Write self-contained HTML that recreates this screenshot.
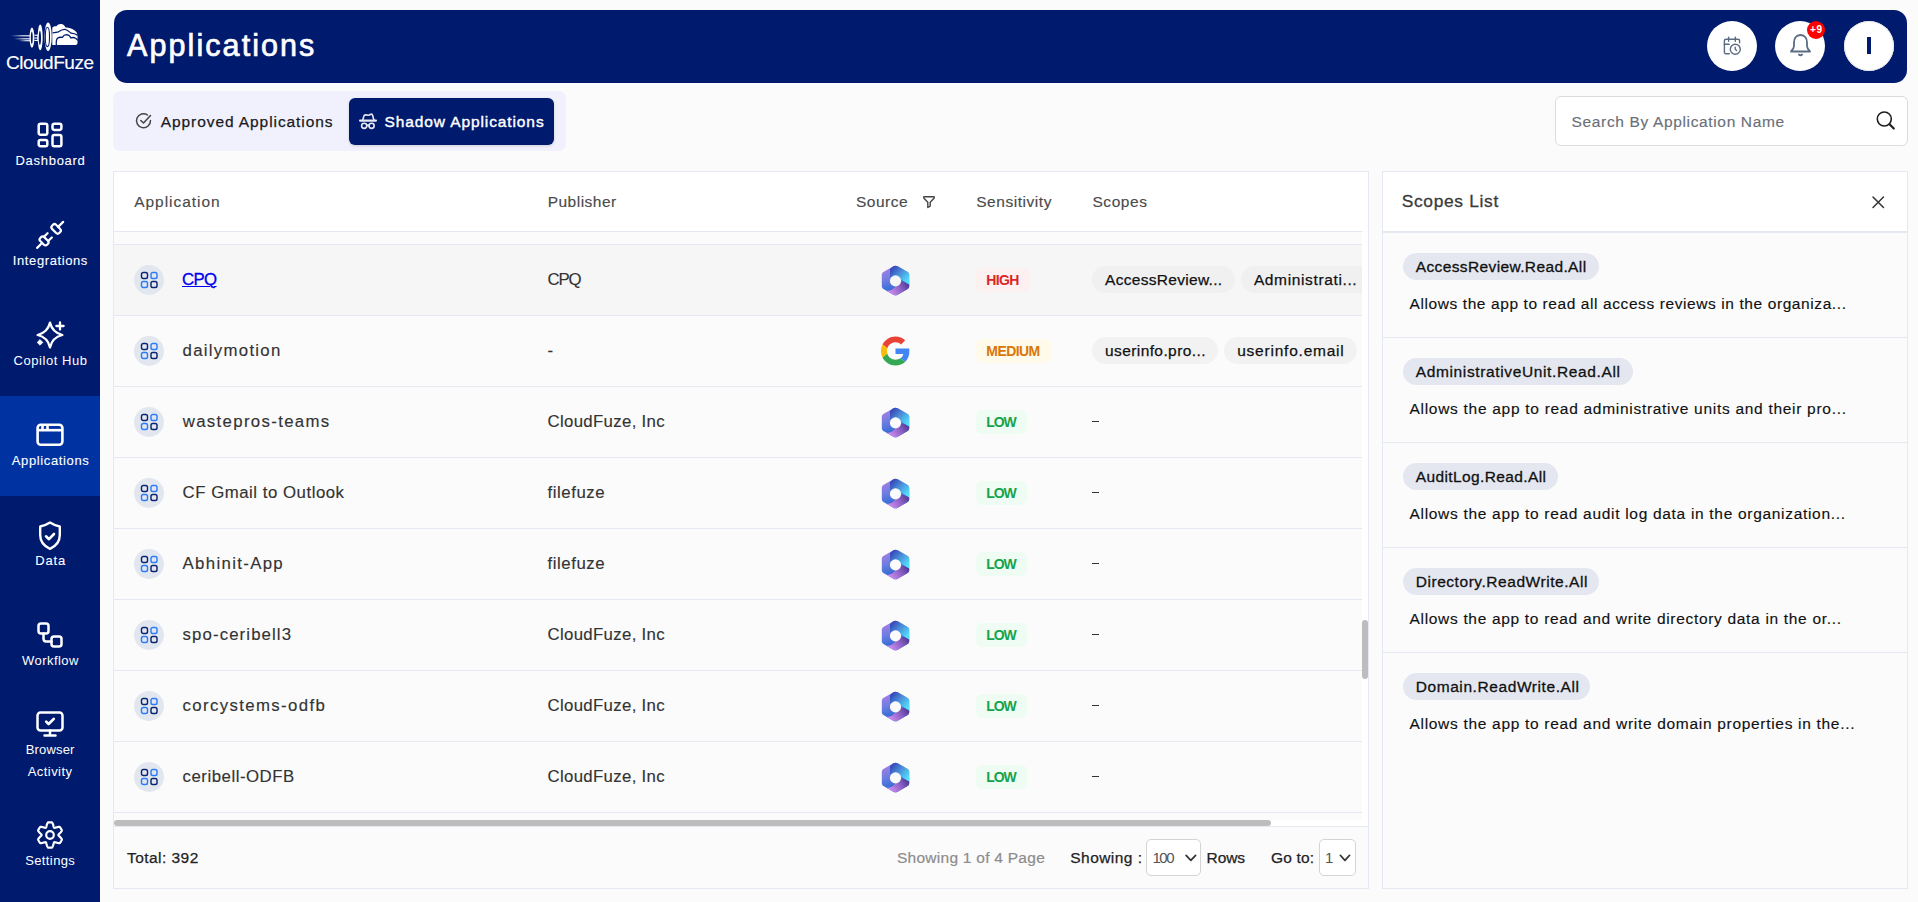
<!DOCTYPE html>
<html><head><meta charset="utf-8"><title>Applications</title>
<style>
html,body{margin:0;padding:0;width:1918px;height:902px;overflow:hidden;background:#fbfbfc;font-family:"Liberation Sans",sans-serif}
.t{position:absolute;white-space:nowrap}
#sb{position:absolute;left:0;top:0;width:100px;height:902px;background:#001a6e}
svg{overflow:visible}
</style></head><body>
<div id="sb"></div>
<div style="position:absolute;left:0;top:396px;width:100px;height:100px;background:#0033a1"></div>
<div class="t" style="left:6.00px;top:53px;font-size:19px;line-height:19px;letter-spacing:-0.488px;color:#fff;-webkit-text-stroke:0.15px #fff;">CloudFuze</div>
<svg style="position:absolute;left:0;top:0" width="100" height="80" viewBox="0 0 100 80">
<defs><linearGradient id="spd" x1="0" y1="0" x2="1" y2="0"><stop offset="0" stop-color="#fff" stop-opacity="0"/><stop offset=".55" stop-color="#fff" stop-opacity=".85"/><stop offset="1" stop-color="#fff"/></linearGradient></defs>
<rect x="11" y="35.2" width="21" height="1.2" fill="url(#spd)"/><rect x="14" y="38.2" width="18" height="1.2" fill="url(#spd)"/><rect x="19" y="40.1" width="13" height="1.2" fill="url(#spd)"/>
<ellipse cx="31.95" cy="37.65" rx="2.4" ry="10.1" fill="#fff"/><ellipse cx="31.8" cy="37.8" rx="0.95" ry="6.2" fill="#001a6e"/>
<rect x="34.4" y="34.7" width="3.6" height="1.1" fill="#fff"/><rect x="34.4" y="37.5" width="3.6" height="1.1" fill="#fff"/><rect x="34.4" y="39.9" width="3.6" height="1.1" fill="#fff"/><rect x="37.3" y="34.5" width="1.3" height="6.6" fill="#fff"/>
<ellipse cx="40.2" cy="37.45" rx="2.5" ry="12.85" fill="#fff"/><ellipse cx="39.9" cy="37.95" rx="1.15" ry="7.1" fill="#001a6e"/>
<ellipse cx="48.1" cy="36.7" rx="3.6" ry="14.3" fill="#fff"/><ellipse cx="47.4" cy="36.95" rx="2.1" ry="9.7" fill="none" stroke="#001a6e" stroke-width="1.1"/>
<path d="M52.3 45 L52.3 27.5 C53.5 26.5 55 26 56.5 26.2 C57.5 24.5 59.5 23.8 61.3 24 C63 24.2 64.5 25.2 65.5 27.5 C67 27.5 69 27.8 71 28.6 C74 29.5 76.5 31.5 77.5 34.5 L77.5 43 C77.5 44.2 76.7 45 75.5 45 Z" fill="#fff"/>
<path d="M52.6 32.8 C55 32.6 57 32.3 58.5 31.8 C61 30 63 29.2 65 29.4 C67.5 29.8 69.5 32 71 33.2 C73.5 33.3 75.5 33.8 77.8 35.4" fill="none" stroke="#001a6e" stroke-width="1.3"/>
<path d="M56.4 45.5 C56 42 56.3 39.5 57.5 38.2 C59 37 61 37.2 62.3 37.4 C63.5 35.3 65 34.6 66.5 34.6 C68.5 34.7 70 36 71 38 C72.3 37.4 74 37.3 75.5 38.2 C76.5 38.8 77.3 39.5 77.8 40.3" fill="none" stroke="#001a6e" stroke-width="1.3"/>
</svg>
<div class="t" style="left:15.50px;top:154px;font-size:13px;line-height:13px;letter-spacing:0.712px;color:#fff;-webkit-text-stroke:0.1px #fff;">Dashboard</div>
<div class="t" style="left:12.80px;top:254px;font-size:13px;line-height:13px;letter-spacing:0.600px;color:#fff;-webkit-text-stroke:0.1px #fff;">Integrations</div>
<div class="t" style="left:13.60px;top:354px;font-size:13px;line-height:13px;letter-spacing:0.540px;color:#fff;">Copilot Hub</div>
<div class="t" style="left:11.80px;top:454px;font-size:13px;line-height:13px;letter-spacing:0.627px;color:#fff;-webkit-text-stroke:0.1px #fff;">Applications</div>
<div class="t" style="left:35.30px;top:554px;font-size:13px;line-height:13px;letter-spacing:0.800px;color:#fff;-webkit-text-stroke:0.1px #fff;">Data</div>
<div class="t" style="left:22.10px;top:654px;font-size:13px;line-height:13px;letter-spacing:0.429px;color:#fff;">Workflow</div>
<div class="t" style="left:25.70px;top:743px;font-size:13px;line-height:13px;letter-spacing:0.167px;color:#fff;">Browser</div>
<div class="t" style="left:27.70px;top:765px;font-size:13px;line-height:13px;letter-spacing:0.443px;color:#fff;">Activity</div>
<div class="t" style="left:25.20px;top:854px;font-size:13px;line-height:13px;letter-spacing:0.386px;color:#fff;">Settings</div>
<svg style="position:absolute;left:36px;top:121px" width="28" height="28" viewBox="0 0 28 28" fill="none" stroke="#fff" stroke-width="2.5" stroke-linejoin="round">
<rect x="2.7" y="2.7" width="8.6" height="11" rx="1.8"/><rect x="16.5" y="2.7" width="8.9" height="6.2" rx="1.8"/>
<rect x="2.7" y="19" width="8.6" height="6.2" rx="1.8"/><rect x="16.5" y="14.1" width="8.9" height="11.1" rx="1.8"/></svg>
<svg style="position:absolute;left:36px;top:221px" width="28" height="28" viewBox="0 0 28 28" fill="none" stroke="#fff" stroke-width="2.2" stroke-linecap="round" stroke-linejoin="round">
<g transform="rotate(-45 14 14)">
<path d="M-4.2 14 H2.8"/><rect x="2.8" y="9.2" width="5.6" height="9.6" rx="2.2"/><path d="M8.4 11 H13.6 M8.4 17 H13.6"/>
<rect x="19.8" y="8.9" width="5.7" height="10.2" rx="2.2"/><path d="M25.5 14 H32.6"/>
</g></svg>
<svg style="position:absolute;left:36px;top:321px" width="28" height="28" viewBox="0 0 28 28">
<path d="M14 1.6 Q16.3 11.7 26.4 14 Q16.3 16.3 14 26.4 Q11.7 16.3 1.6 14 Q11.7 11.7 14 1.6 Z" fill="none" stroke="#fff" stroke-width="2.3" stroke-linejoin="round"/>
<path d="M24 1.4 V8.6 M20.4 5 H27.6" stroke="#fff" stroke-width="2.3" stroke-linecap="round"/>
<path d="M4 18.6 L6.8 21.4 L4 24.2 L1.2 21.4 Z" fill="#fff" stroke="#fff" stroke-width="0.8" stroke-linejoin="round"/></svg>
<svg style="position:absolute;left:36px;top:423px" width="28" height="24" viewBox="0 0 28 24" fill="none" stroke="#fff" stroke-width="2.6" stroke-linecap="butt" stroke-linejoin="round">
<rect x="1.6" y="1.8" width="24.8" height="20" rx="3.2"/><path d="M1.6 7.2 H26.4"/><path d="M6.5 1.8 V7.2 M11.5 1.8 V7.2" stroke-width="2.6"/></svg>
<svg style="position:absolute;left:37px;top:520.6px" width="26" height="30" viewBox="0 0 26 30" fill="none" stroke="#fff" stroke-width="2.4" stroke-linecap="round" stroke-linejoin="round">
<path d="M13 1.6 C10 3.6 7 4.9 3.2 5.5 L3.2 14 C3.2 21 7.5 25.3 13 27.8 C18.5 25.3 22.8 21 22.8 14 L22.8 5.5 C19 4.9 16 3.6 13 1.6 Z"/><path d="M9 15.3 L12 18.2 L17 13" stroke-width="2.6"/></svg>
<svg style="position:absolute;left:37px;top:622px" width="26" height="26" viewBox="0 0 26 26" fill="none" stroke="#fff" stroke-width="2.5" stroke-linecap="round" stroke-linejoin="round">
<rect x="1.5" y="1.5" width="10" height="10" rx="2.5"/><rect x="14.5" y="14.5" width="10" height="10" rx="2.5"/><path d="M6.5 11.5 V16.5 C6.5 18 7 19.5 9 19.5 H14.5"/></svg>
<svg style="position:absolute;left:36px;top:711px" width="28" height="26" viewBox="0 0 28 26" fill="none" stroke="#fff" stroke-width="2.5" stroke-linecap="round" stroke-linejoin="round">
<rect x="1.5" y="1.5" width="25" height="18" rx="3"/><path d="M14 19.5 V24.5 M8.5 24.5 H19.5"/><path d="M10.2 10.6 L12.6 13 L17.8 7.9" stroke-width="2.7"/></svg>
<svg style="position:absolute;left:36px;top:821px" width="28" height="28" viewBox="0 0 28 28" fill="none" stroke="#fff" stroke-width="2.2" stroke-linejoin="round">
<path d="M22.40 14.00 L22.45 14.22 L22.58 14.45 L22.76 14.69 L23.00 14.95 L23.27 15.22 L23.58 15.52 L23.90 15.84 L24.24 16.18 L24.57 16.54 L24.90 16.92 L25.20 17.32 L25.48 17.73 L25.72 18.15 L25.86 18.55 L25.73 18.86 L25.60 19.17 L25.46 19.47 L25.32 19.77 L25.16 20.06 L25.00 20.35 L24.83 20.64 L24.65 20.92 L24.47 21.19 L24.27 21.46 L24.08 21.73 L23.87 21.99 L23.46 22.08 L22.97 22.08 L22.47 22.04 L21.98 21.98 L21.48 21.89 L21.00 21.78 L20.54 21.66 L20.10 21.54 L19.69 21.42 L19.32 21.32 L18.98 21.25 L18.68 21.20 L18.42 21.21 L18.20 21.27 L18.03 21.43 L17.90 21.65 L17.78 21.94 L17.68 22.27 L17.58 22.64 L17.48 23.05 L17.36 23.49 L17.23 23.95 L17.09 24.42 L16.92 24.90 L16.73 25.36 L16.51 25.81 L16.27 26.23 L15.99 26.54 L15.66 26.59 L15.33 26.63 L15.00 26.66 L14.66 26.68 L14.33 26.70 L14.00 26.70 L13.67 26.70 L13.34 26.68 L13.00 26.66 L12.67 26.63 L12.34 26.59 L12.01 26.54 L11.73 26.23 L11.49 25.81 L11.27 25.36 L11.08 24.90 L10.91 24.42 L10.77 23.95 L10.64 23.49 L10.52 23.05 L10.42 22.64 L10.32 22.27 L10.22 21.94 L10.10 21.65 L9.97 21.43 L9.80 21.27 L9.58 21.21 L9.32 21.20 L9.02 21.25 L8.68 21.32 L8.31 21.42 L7.90 21.54 L7.46 21.66 L7.00 21.78 L6.52 21.89 L6.02 21.98 L5.53 22.04 L5.03 22.08 L4.54 22.08 L4.13 21.99 L3.92 21.73 L3.73 21.46 L3.53 21.19 L3.35 20.92 L3.17 20.64 L3.00 20.35 L2.84 20.06 L2.68 19.77 L2.54 19.47 L2.40 19.17 L2.27 18.86 L2.14 18.55 L2.28 18.15 L2.52 17.73 L2.80 17.32 L3.10 16.92 L3.43 16.54 L3.76 16.18 L4.10 15.84 L4.42 15.52 L4.73 15.22 L5.00 14.95 L5.24 14.69 L5.42 14.45 L5.55 14.22 L5.60 14.00 L5.55 13.78 L5.42 13.55 L5.24 13.31 L5.00 13.05 L4.73 12.78 L4.42 12.48 L4.10 12.16 L3.76 11.82 L3.43 11.46 L3.10 11.08 L2.80 10.68 L2.52 10.27 L2.28 9.85 L2.14 9.45 L2.27 9.14 L2.40 8.83 L2.54 8.53 L2.68 8.23 L2.84 7.94 L3.00 7.65 L3.17 7.36 L3.35 7.08 L3.53 6.81 L3.73 6.54 L3.92 6.27 L4.13 6.01 L4.54 5.92 L5.03 5.92 L5.53 5.96 L6.02 6.02 L6.52 6.11 L7.00 6.22 L7.46 6.34 L7.90 6.46 L8.31 6.58 L8.68 6.68 L9.02 6.75 L9.32 6.80 L9.58 6.79 L9.80 6.73 L9.97 6.57 L10.10 6.35 L10.22 6.06 L10.32 5.73 L10.42 5.36 L10.52 4.95 L10.64 4.51 L10.77 4.05 L10.91 3.58 L11.08 3.10 L11.27 2.64 L11.49 2.19 L11.73 1.77 L12.01 1.46 L12.34 1.41 L12.67 1.37 L13.00 1.34 L13.34 1.32 L13.67 1.30 L14.00 1.30 L14.33 1.30 L14.66 1.32 L15.00 1.34 L15.33 1.37 L15.66 1.41 L15.99 1.46 L16.27 1.77 L16.51 2.19 L16.73 2.64 L16.92 3.10 L17.09 3.58 L17.23 4.05 L17.36 4.51 L17.48 4.95 L17.58 5.36 L17.68 5.73 L17.78 6.06 L17.90 6.35 L18.03 6.57 L18.20 6.73 L18.42 6.79 L18.68 6.80 L18.98 6.75 L19.32 6.68 L19.69 6.58 L20.10 6.46 L20.54 6.34 L21.00 6.22 L21.48 6.11 L21.98 6.02 L22.47 5.96 L22.97 5.92 L23.46 5.92 L23.87 6.01 L24.08 6.27 L24.27 6.54 L24.47 6.81 L24.65 7.08 L24.83 7.36 L25.00 7.65 L25.16 7.94 L25.32 8.23 L25.46 8.53 L25.60 8.83 L25.73 9.14 L25.86 9.45 L25.72 9.85 L25.48 10.27 L25.20 10.68 L24.90 11.08 L24.57 11.46 L24.24 11.82 L23.90 12.16 L23.58 12.48 L23.27 12.78 L23.00 13.05 L22.76 13.31 L22.58 13.55 L22.45 13.78 L22.40 14.00Z"/><circle cx="14" cy="14" r="3.8"/></svg>
<div style="position:absolute;left:114px;top:10px;width:1793px;height:73px;background:#001a6e;border-radius:13px"></div>
<div class="t" style="left:127.10px;top:30px;font-size:30.5px;line-height:30.5px;letter-spacing:2.073px;color:#fff;-webkit-text-stroke:0.7px #fff;">Applications</div>
<div style="position:absolute;left:1707px;top:21px;width:50px;height:50px;border-radius:50%;background:#fff;"></div>
<div style="position:absolute;left:1775px;top:21px;width:50px;height:50px;border-radius:50%;background:#fff;"></div>
<div style="position:absolute;left:1844px;top:21px;width:50px;height:50px;border-radius:50%;background:#fff;box-shadow:inset 0 0 0 1px #e6e6e6;"></div>
<svg style="position:absolute;left:1722px;top:35px" width="22" height="22" viewBox="0 0 22 22" fill="none" stroke="#5b6b82" stroke-width="1.4" stroke-linecap="round" stroke-linejoin="round">
<path d="M7.3 18.8 H4 C3 18.8 2.4 18.2 2.4 17.2 V5.8 C2.4 4.8 3 4.3 4 4.3 H16 C17 4.3 17.6 4.8 17.6 5.8 V7.8"/><path d="M6.6 2.2 V6.2 M13.3 2.2 V6.2 M2.4 9.3 H7.2"/>
<circle cx="13.3" cy="14.2" r="5"/><path d="M13.2 12.3 V14.3 L14.6 15.6"/></svg>
<svg style="position:absolute;left:1789px;top:33.3px" width="23" height="25" viewBox="0 0 23 25" fill="none" stroke="#5b6b82" stroke-width="1.8" stroke-linecap="round" stroke-linejoin="round">
<path d="M11.5 2 C7 2 5 5.5 5 9.5 L5 13 C5 15 3.5 17 2 18.5 H21 C19.5 17 18 15 18 13 L18 9.5 C18 5.5 16 2 11.5 2 Z"/><path d="M10 21.5 C10.5 22.5 12.5 22.5 13 21.5"/></svg>
<div style="position:absolute;left:1807px;top:21px;width:18px;height:18px;border-radius:50%;background:#f00"></div>
<div class="t" style="left:1810.00px;top:25px;font-size:10px;line-height:10px;letter-spacing:0.600px;color:#fff;font-weight:bold;">+9</div>
<div style="position:absolute;left:1867.3px;top:37px;width:3.5px;height:17px;background:#001a6e"></div>
<div style="position:absolute;left:113px;top:91px;width:453px;height:60px;background:#f1f1fe;border-radius:7px"></div>
<div style="position:absolute;left:349px;top:98px;width:205px;height:47px;background:#001a6e;border-radius:6px;box-shadow:0 1px 3px rgba(0,0,0,.15)"></div>
<svg style="position:absolute;left:135px;top:112px" width="18" height="18" viewBox="0 0 18 18" fill="none" stroke="#444" stroke-width="1.5" stroke-linecap="round" stroke-linejoin="round">
<path d="M15.5 8.5 A7 7 0 1 1 12.5 3"/><path d="M5.8 8.5 L8.5 11 L15.5 3.5"/></svg>
<div class="t" style="left:160.80px;top:114px;font-size:15.5px;line-height:15.5px;letter-spacing:0.915px;color:#1a1a1a;-webkit-text-stroke:0.25px #1a1a1a;">Approved Applications</div>
<svg style="position:absolute;left:359px;top:112.5px" width="18" height="17" viewBox="0 0 18 17" fill="none" stroke="#e6e8f0" stroke-width="1.6" stroke-linecap="round" stroke-linejoin="round">
<path d="M1 7.6 H17" stroke-width="2.1"/><path d="M3.6 7.5 L5 2.8 C5.3 1.9 6 1.7 7 1.9 L9 2.3 C10 2.4 11.2 1.2 12.2 1.1 C13 1 13.4 1.6 13.6 2.3 L15 7.5"/>
<circle cx="5.2" cy="12.8" r="2.6"/><circle cx="12.6" cy="12.8" r="2.6"/><path d="M7.8 12.6 C8.4 12 9.4 12 10 12.6"/></svg>
<div class="t" style="left:384.50px;top:114px;font-size:15.5px;line-height:15.5px;letter-spacing:0.894px;color:#fff;-webkit-text-stroke:0.4px #fff;">Shadow Applications</div>
<div style="position:absolute;left:1555px;top:96px;width:351px;height:48px;background:#fff;border:1px solid #dcdcdc;border-radius:6px"></div>
<div class="t" style="left:1571.60px;top:114px;font-size:15.5px;line-height:15.5px;letter-spacing:0.644px;color:#6b6f78;-webkit-text-stroke:0.15px #6b6f78;">Search By Application Name</div>
<svg style="position:absolute;left:1875px;top:110px" width="21" height="21" viewBox="0 0 21 21" fill="none" stroke="#1f1f1f" stroke-width="1.6" stroke-linecap="round">
<circle cx="9.3" cy="9" r="7"/><path d="M14.5 14.2 L18.8 18.5" stroke-width="2.2"/></svg>
<div style="position:absolute;left:113px;top:171px;width:1254px;height:716px;border:1px solid #e3e8f1;background:#fbfbfc"></div>
<div style="position:absolute;left:114px;top:172px;width:1254px;height:59px;background:#fff"></div>
<div style="position:absolute;left:114px;top:231px;width:1248px;height:1px;background:#e3e8f1"></div>
<div style="position:absolute;left:114px;top:244px;width:1248px;height:1px;background:#e3e8f1"></div>
<div style="position:absolute;left:1362px;top:232px;width:6px;height:594px;background:#fff"></div>
<div class="t" style="left:134.20px;top:194px;font-size:15.5px;line-height:15.5px;letter-spacing:0.960px;color:#4a4a4a;-webkit-text-stroke:0.15px #4a4a4a;">Application</div>
<div class="t" style="left:547.70px;top:194px;font-size:15.5px;line-height:15.5px;letter-spacing:0.488px;color:#4a4a4a;-webkit-text-stroke:0.15px #4a4a4a;">Publisher</div>
<div class="t" style="left:855.90px;top:194px;font-size:15.5px;line-height:15.5px;letter-spacing:0.520px;color:#4a4a4a;-webkit-text-stroke:0.15px #4a4a4a;">Source</div>
<div class="t" style="left:976.20px;top:194px;font-size:15.5px;line-height:15.5px;letter-spacing:0.550px;color:#4a4a4a;-webkit-text-stroke:0.15px #4a4a4a;">Sensitivity</div>
<div class="t" style="left:1092.40px;top:194px;font-size:15.5px;line-height:15.5px;letter-spacing:0.580px;color:#4a4a4a;-webkit-text-stroke:0.15px #4a4a4a;">Scopes</div>
<svg style="position:absolute;left:922px;top:195px" width="14" height="14" viewBox="0 0 14 14" fill="none" stroke="#444" stroke-width="1.4" stroke-linejoin="round">
<path d="M1.8 1.8 C1.6 2.6 1.7 3 2.2 3.6 L5.8 7.3 V12.5 L8.2 11.2 V7.3 L11.8 3.6 C12.3 3 12.4 2.6 12.2 1.8 Z"/></svg>
<div style="position:absolute;left:114px;top:245px;width:1248px;height:70px;background:#f6f6f7"></div>
<div style="position:absolute;left:114px;top:315px;width:1248px;height:1px;background:#e3e8f1"></div>
<div style="position:absolute;left:134px;top:265px;width:30px;height:30px;border-radius:50%;background:#e2e7ef"></div>
<svg style="position:absolute;left:140px;top:271px" width="19" height="18" viewBox="0 0 19 18" fill="none" stroke-width="1.45">
<rect x="1.5" y="1.5" width="6" height="6" rx="1.8" stroke="#0b2470"/><rect x="11" y="1.5" width="6" height="6" rx="1.8" stroke="#2d7cf7"/>
<rect x="1.5" y="10.5" width="6" height="6" rx="1.8" stroke="#2d7cf7"/><rect x="11" y="10.5" width="6" height="6" rx="1.8" stroke="#0b2470"/></svg>
<div class="t" style="left:182.00px;top:272px;font-size:16.8px;line-height:16.8px;letter-spacing:-0.600px;color:#0000ee;-webkit-text-stroke:0.3px #0000ee;text-decoration:underline;text-underline-offset:1px;text-decoration-thickness:1px;">CPQ</div>
<div class="t" style="left:547.50px;top:272px;font-size:16.8px;line-height:16.8px;letter-spacing:-1.100px;color:#333;-webkit-text-stroke:0.15px #333;">CPQ</div>
<svg style="position:absolute;left:881px;top:264.5px" width="29" height="31" viewBox="0 0 29 31">
<defs>
<linearGradient id="ga0" x1="0.1" y1="0.1" x2="0.9" y2="0.8"><stop offset="0" stop-color="#3347b8"/><stop offset=".45" stop-color="#4a8ad8"/><stop offset="1" stop-color="#52dcf8"/></linearGradient>
<linearGradient id="gb0" x1="0" y1="0" x2="0.3" y2="1"><stop offset="0" stop-color="#b67ee8"/><stop offset=".5" stop-color="#6d7de0"/><stop offset="1" stop-color="#1a66d0"/></linearGradient>
<linearGradient id="gc0" x1="0" y1="0.6" x2="1" y2="0.2"><stop offset="0" stop-color="#d690f3"/><stop offset=".55" stop-color="#8f63c8"/><stop offset="1" stop-color="#4f3690"/></linearGradient>
</defs>
<path d="M12.3 1.3 C13.7 0.5 15.3 0.5 16.7 1.3 L26.6 7 C27.6 7.6 28.2 8.6 28.2 9.8 L28.2 21.2 C28.2 22.4 27.6 23.4 26.6 24 L16.7 29.7 C15.3 30.5 13.7 30.5 12.3 29.7 L2.4 24 C1.4 23.4 0.8 22.4 0.8 21.2 L0.8 9.8 C0.8 8.6 1.4 7.6 2.4 7 Z" fill="url(#gb0)"/>
<path d="M9 4 L12.3 1.3 C13.7 0.5 15.3 0.5 16.7 1.3 L26.6 7 C27.6 7.6 28.2 8.6 28.2 9.8 L28.2 19.8 L20 14.5 C17.5 12.2 14 10.8 9 12.5 Z" fill="url(#ga0)"/>
<path d="M28.2 19.8 L28.2 21.2 C28.2 22.4 27.6 23.4 26.6 24 L16.7 29.7 C15.3 30.5 13.7 30.5 12.3 29.7 L5 25.5 C8.5 26.5 11.5 24.5 14 22 L19 17.5 C21.5 15.5 25 17.5 28.2 19.8 Z" fill="url(#gc0)"/>
<circle cx="14.5" cy="15.9" r="5.6" fill="#f6f6f7"/>
</svg>
<div style="position:absolute;left:976px;top:268px;width:54px;height:24px;background:#fdf0f0;border-radius:6px"></div>
<div class="t" style="left:986.30px;top:273px;font-size:14px;line-height:14px;letter-spacing:-0.667px;color:#dc2626;font-weight:bold;">HIGH</div>
<div style="position:absolute;left:114px;top:386px;width:1248px;height:1px;background:#e3e8f1"></div>
<div style="position:absolute;left:134px;top:336px;width:30px;height:30px;border-radius:50%;background:#e2e7ef"></div>
<svg style="position:absolute;left:140px;top:342px" width="19" height="18" viewBox="0 0 19 18" fill="none" stroke-width="1.45">
<rect x="1.5" y="1.5" width="6" height="6" rx="1.8" stroke="#0b2470"/><rect x="11" y="1.5" width="6" height="6" rx="1.8" stroke="#2d7cf7"/>
<rect x="1.5" y="10.5" width="6" height="6" rx="1.8" stroke="#2d7cf7"/><rect x="11" y="10.5" width="6" height="6" rx="1.8" stroke="#0b2470"/></svg>
<div class="t" style="left:182.60px;top:343px;font-size:16.8px;line-height:16.8px;letter-spacing:1.280px;color:#333;-webkit-text-stroke:0.15px #333;">dailymotion</div>
<div class="t" style="left:547.50px;top:343px;font-size:16.8px;line-height:16.8px;letter-spacing:0.000px;color:#333;-webkit-text-stroke:0.15px #333;">-</div>
<svg style="position:absolute;left:881px;top:336px" width="29" height="30" viewBox="0 0 48 48">
<path fill="#EA4335" d="M24 9.5c3.54 0 6.71 1.22 9.21 3.6l6.85-6.85C35.9 2.38 30.47 0 24 0 14.62 0 6.51 5.38 2.56 13.22l7.98 6.19C12.43 13.72 17.74 9.5 24 9.5z"/>
<path fill="#4285F4" d="M46.98 24.55c0-1.57-.15-3.09-.38-4.55H24v9.02h12.94c-.58 2.96-2.26 5.48-4.78 7.18l7.73 6c4.51-4.18 7.09-10.36 7.09-17.65z"/>
<path fill="#FBBC05" d="M10.53 28.59c-.48-1.45-.76-2.99-.76-4.59s.27-3.14.76-4.59l-7.98-6.19C.92 16.46 0 20.12 0 24c0 3.88.92 7.54 2.56 10.78l7.97-6.19z"/>
<path fill="#34A853" d="M24 48c6.48 0 11.93-2.13 15.89-5.81l-7.73-6c-2.15 1.45-4.92 2.3-8.16 2.3-6.26 0-11.57-4.22-13.47-9.91l-7.98 6.19C6.51 42.62 14.62 48 24 48z"/>
</svg>
<div style="position:absolute;left:976px;top:339px;width:75px;height:24px;background:#fffaea;border-radius:6px"></div>
<div class="t" style="left:986.30px;top:344px;font-size:14px;line-height:14px;letter-spacing:-0.560px;color:#d97706;font-weight:bold;">MEDIUM</div>
<div style="position:absolute;left:114px;top:457px;width:1248px;height:1px;background:#e3e8f1"></div>
<div style="position:absolute;left:134px;top:407px;width:30px;height:30px;border-radius:50%;background:#e2e7ef"></div>
<svg style="position:absolute;left:140px;top:413px" width="19" height="18" viewBox="0 0 19 18" fill="none" stroke-width="1.45">
<rect x="1.5" y="1.5" width="6" height="6" rx="1.8" stroke="#0b2470"/><rect x="11" y="1.5" width="6" height="6" rx="1.8" stroke="#2d7cf7"/>
<rect x="1.5" y="10.5" width="6" height="6" rx="1.8" stroke="#2d7cf7"/><rect x="11" y="10.5" width="6" height="6" rx="1.8" stroke="#0b2470"/></svg>
<div class="t" style="left:182.70px;top:414px;font-size:16.8px;line-height:16.8px;letter-spacing:1.343px;color:#333;-webkit-text-stroke:0.15px #333;">wastepros-teams</div>
<div class="t" style="left:547.50px;top:414px;font-size:16.8px;line-height:16.8px;letter-spacing:0.331px;color:#333;-webkit-text-stroke:0.15px #333;">CloudFuze, Inc</div>
<svg style="position:absolute;left:881px;top:406.5px" width="29" height="31" viewBox="0 0 29 31">
<defs>
<linearGradient id="ga2" x1="0.1" y1="0.1" x2="0.9" y2="0.8"><stop offset="0" stop-color="#3347b8"/><stop offset=".45" stop-color="#4a8ad8"/><stop offset="1" stop-color="#52dcf8"/></linearGradient>
<linearGradient id="gb2" x1="0" y1="0" x2="0.3" y2="1"><stop offset="0" stop-color="#b67ee8"/><stop offset=".5" stop-color="#6d7de0"/><stop offset="1" stop-color="#1a66d0"/></linearGradient>
<linearGradient id="gc2" x1="0" y1="0.6" x2="1" y2="0.2"><stop offset="0" stop-color="#d690f3"/><stop offset=".55" stop-color="#8f63c8"/><stop offset="1" stop-color="#4f3690"/></linearGradient>
</defs>
<path d="M12.3 1.3 C13.7 0.5 15.3 0.5 16.7 1.3 L26.6 7 C27.6 7.6 28.2 8.6 28.2 9.8 L28.2 21.2 C28.2 22.4 27.6 23.4 26.6 24 L16.7 29.7 C15.3 30.5 13.7 30.5 12.3 29.7 L2.4 24 C1.4 23.4 0.8 22.4 0.8 21.2 L0.8 9.8 C0.8 8.6 1.4 7.6 2.4 7 Z" fill="url(#gb2)"/>
<path d="M9 4 L12.3 1.3 C13.7 0.5 15.3 0.5 16.7 1.3 L26.6 7 C27.6 7.6 28.2 8.6 28.2 9.8 L28.2 19.8 L20 14.5 C17.5 12.2 14 10.8 9 12.5 Z" fill="url(#ga2)"/>
<path d="M28.2 19.8 L28.2 21.2 C28.2 22.4 27.6 23.4 26.6 24 L16.7 29.7 C15.3 30.5 13.7 30.5 12.3 29.7 L5 25.5 C8.5 26.5 11.5 24.5 14 22 L19 17.5 C21.5 15.5 25 17.5 28.2 19.8 Z" fill="url(#gc2)"/>
<circle cx="14.5" cy="15.9" r="5.6" fill="#fbfbfc"/>
</svg>
<div style="position:absolute;left:976px;top:410px;width:51px;height:24px;background:#effcf3;border-radius:6px"></div>
<div class="t" style="left:986.30px;top:415px;font-size:14px;line-height:14px;letter-spacing:-1.100px;color:#16a34a;font-weight:bold;">LOW</div>
<div style="position:absolute;left:1092px;top:421px;width:7px;height:1.3px;background:#333"></div>
<div style="position:absolute;left:114px;top:528px;width:1248px;height:1px;background:#e3e8f1"></div>
<div style="position:absolute;left:134px;top:478px;width:30px;height:30px;border-radius:50%;background:#e2e7ef"></div>
<svg style="position:absolute;left:140px;top:484px" width="19" height="18" viewBox="0 0 19 18" fill="none" stroke-width="1.45">
<rect x="1.5" y="1.5" width="6" height="6" rx="1.8" stroke="#0b2470"/><rect x="11" y="1.5" width="6" height="6" rx="1.8" stroke="#2d7cf7"/>
<rect x="1.5" y="10.5" width="6" height="6" rx="1.8" stroke="#2d7cf7"/><rect x="11" y="10.5" width="6" height="6" rx="1.8" stroke="#0b2470"/></svg>
<div class="t" style="left:182.60px;top:485px;font-size:16.8px;line-height:16.8px;letter-spacing:0.522px;color:#333;-webkit-text-stroke:0.15px #333;">CF Gmail to Outlook</div>
<div class="t" style="left:547.50px;top:485px;font-size:16.8px;line-height:16.8px;letter-spacing:0.557px;color:#333;-webkit-text-stroke:0.15px #333;">filefuze</div>
<svg style="position:absolute;left:881px;top:477.5px" width="29" height="31" viewBox="0 0 29 31">
<defs>
<linearGradient id="ga3" x1="0.1" y1="0.1" x2="0.9" y2="0.8"><stop offset="0" stop-color="#3347b8"/><stop offset=".45" stop-color="#4a8ad8"/><stop offset="1" stop-color="#52dcf8"/></linearGradient>
<linearGradient id="gb3" x1="0" y1="0" x2="0.3" y2="1"><stop offset="0" stop-color="#b67ee8"/><stop offset=".5" stop-color="#6d7de0"/><stop offset="1" stop-color="#1a66d0"/></linearGradient>
<linearGradient id="gc3" x1="0" y1="0.6" x2="1" y2="0.2"><stop offset="0" stop-color="#d690f3"/><stop offset=".55" stop-color="#8f63c8"/><stop offset="1" stop-color="#4f3690"/></linearGradient>
</defs>
<path d="M12.3 1.3 C13.7 0.5 15.3 0.5 16.7 1.3 L26.6 7 C27.6 7.6 28.2 8.6 28.2 9.8 L28.2 21.2 C28.2 22.4 27.6 23.4 26.6 24 L16.7 29.7 C15.3 30.5 13.7 30.5 12.3 29.7 L2.4 24 C1.4 23.4 0.8 22.4 0.8 21.2 L0.8 9.8 C0.8 8.6 1.4 7.6 2.4 7 Z" fill="url(#gb3)"/>
<path d="M9 4 L12.3 1.3 C13.7 0.5 15.3 0.5 16.7 1.3 L26.6 7 C27.6 7.6 28.2 8.6 28.2 9.8 L28.2 19.8 L20 14.5 C17.5 12.2 14 10.8 9 12.5 Z" fill="url(#ga3)"/>
<path d="M28.2 19.8 L28.2 21.2 C28.2 22.4 27.6 23.4 26.6 24 L16.7 29.7 C15.3 30.5 13.7 30.5 12.3 29.7 L5 25.5 C8.5 26.5 11.5 24.5 14 22 L19 17.5 C21.5 15.5 25 17.5 28.2 19.8 Z" fill="url(#gc3)"/>
<circle cx="14.5" cy="15.9" r="5.6" fill="#fbfbfc"/>
</svg>
<div style="position:absolute;left:976px;top:481px;width:51px;height:24px;background:#effcf3;border-radius:6px"></div>
<div class="t" style="left:986.30px;top:486px;font-size:14px;line-height:14px;letter-spacing:-1.100px;color:#16a34a;font-weight:bold;">LOW</div>
<div style="position:absolute;left:1092px;top:492px;width:7px;height:1.3px;background:#333"></div>
<div style="position:absolute;left:114px;top:599px;width:1248px;height:1px;background:#e3e8f1"></div>
<div style="position:absolute;left:134px;top:549px;width:30px;height:30px;border-radius:50%;background:#e2e7ef"></div>
<svg style="position:absolute;left:140px;top:555px" width="19" height="18" viewBox="0 0 19 18" fill="none" stroke-width="1.45">
<rect x="1.5" y="1.5" width="6" height="6" rx="1.8" stroke="#0b2470"/><rect x="11" y="1.5" width="6" height="6" rx="1.8" stroke="#2d7cf7"/>
<rect x="1.5" y="10.5" width="6" height="6" rx="1.8" stroke="#2d7cf7"/><rect x="11" y="10.5" width="6" height="6" rx="1.8" stroke="#0b2470"/></svg>
<div class="t" style="left:182.60px;top:556px;font-size:16.8px;line-height:16.8px;letter-spacing:1.330px;color:#333;-webkit-text-stroke:0.15px #333;">Abhinit-App</div>
<div class="t" style="left:547.50px;top:556px;font-size:16.8px;line-height:16.8px;letter-spacing:0.557px;color:#333;-webkit-text-stroke:0.15px #333;">filefuze</div>
<svg style="position:absolute;left:881px;top:548.5px" width="29" height="31" viewBox="0 0 29 31">
<defs>
<linearGradient id="ga4" x1="0.1" y1="0.1" x2="0.9" y2="0.8"><stop offset="0" stop-color="#3347b8"/><stop offset=".45" stop-color="#4a8ad8"/><stop offset="1" stop-color="#52dcf8"/></linearGradient>
<linearGradient id="gb4" x1="0" y1="0" x2="0.3" y2="1"><stop offset="0" stop-color="#b67ee8"/><stop offset=".5" stop-color="#6d7de0"/><stop offset="1" stop-color="#1a66d0"/></linearGradient>
<linearGradient id="gc4" x1="0" y1="0.6" x2="1" y2="0.2"><stop offset="0" stop-color="#d690f3"/><stop offset=".55" stop-color="#8f63c8"/><stop offset="1" stop-color="#4f3690"/></linearGradient>
</defs>
<path d="M12.3 1.3 C13.7 0.5 15.3 0.5 16.7 1.3 L26.6 7 C27.6 7.6 28.2 8.6 28.2 9.8 L28.2 21.2 C28.2 22.4 27.6 23.4 26.6 24 L16.7 29.7 C15.3 30.5 13.7 30.5 12.3 29.7 L2.4 24 C1.4 23.4 0.8 22.4 0.8 21.2 L0.8 9.8 C0.8 8.6 1.4 7.6 2.4 7 Z" fill="url(#gb4)"/>
<path d="M9 4 L12.3 1.3 C13.7 0.5 15.3 0.5 16.7 1.3 L26.6 7 C27.6 7.6 28.2 8.6 28.2 9.8 L28.2 19.8 L20 14.5 C17.5 12.2 14 10.8 9 12.5 Z" fill="url(#ga4)"/>
<path d="M28.2 19.8 L28.2 21.2 C28.2 22.4 27.6 23.4 26.6 24 L16.7 29.7 C15.3 30.5 13.7 30.5 12.3 29.7 L5 25.5 C8.5 26.5 11.5 24.5 14 22 L19 17.5 C21.5 15.5 25 17.5 28.2 19.8 Z" fill="url(#gc4)"/>
<circle cx="14.5" cy="15.9" r="5.6" fill="#fbfbfc"/>
</svg>
<div style="position:absolute;left:976px;top:552px;width:51px;height:24px;background:#effcf3;border-radius:6px"></div>
<div class="t" style="left:986.30px;top:557px;font-size:14px;line-height:14px;letter-spacing:-1.100px;color:#16a34a;font-weight:bold;">LOW</div>
<div style="position:absolute;left:1092px;top:563px;width:7px;height:1.3px;background:#333"></div>
<div style="position:absolute;left:114px;top:670px;width:1248px;height:1px;background:#e3e8f1"></div>
<div style="position:absolute;left:134px;top:620px;width:30px;height:30px;border-radius:50%;background:#e2e7ef"></div>
<svg style="position:absolute;left:140px;top:626px" width="19" height="18" viewBox="0 0 19 18" fill="none" stroke-width="1.45">
<rect x="1.5" y="1.5" width="6" height="6" rx="1.8" stroke="#0b2470"/><rect x="11" y="1.5" width="6" height="6" rx="1.8" stroke="#2d7cf7"/>
<rect x="1.5" y="10.5" width="6" height="6" rx="1.8" stroke="#2d7cf7"/><rect x="11" y="10.5" width="6" height="6" rx="1.8" stroke="#0b2470"/></svg>
<div class="t" style="left:182.60px;top:627px;font-size:16.8px;line-height:16.8px;letter-spacing:1.108px;color:#333;-webkit-text-stroke:0.15px #333;">spo-ceribell3</div>
<div class="t" style="left:547.50px;top:627px;font-size:16.8px;line-height:16.8px;letter-spacing:0.331px;color:#333;-webkit-text-stroke:0.15px #333;">CloudFuze, Inc</div>
<svg style="position:absolute;left:881px;top:619.5px" width="29" height="31" viewBox="0 0 29 31">
<defs>
<linearGradient id="ga5" x1="0.1" y1="0.1" x2="0.9" y2="0.8"><stop offset="0" stop-color="#3347b8"/><stop offset=".45" stop-color="#4a8ad8"/><stop offset="1" stop-color="#52dcf8"/></linearGradient>
<linearGradient id="gb5" x1="0" y1="0" x2="0.3" y2="1"><stop offset="0" stop-color="#b67ee8"/><stop offset=".5" stop-color="#6d7de0"/><stop offset="1" stop-color="#1a66d0"/></linearGradient>
<linearGradient id="gc5" x1="0" y1="0.6" x2="1" y2="0.2"><stop offset="0" stop-color="#d690f3"/><stop offset=".55" stop-color="#8f63c8"/><stop offset="1" stop-color="#4f3690"/></linearGradient>
</defs>
<path d="M12.3 1.3 C13.7 0.5 15.3 0.5 16.7 1.3 L26.6 7 C27.6 7.6 28.2 8.6 28.2 9.8 L28.2 21.2 C28.2 22.4 27.6 23.4 26.6 24 L16.7 29.7 C15.3 30.5 13.7 30.5 12.3 29.7 L2.4 24 C1.4 23.4 0.8 22.4 0.8 21.2 L0.8 9.8 C0.8 8.6 1.4 7.6 2.4 7 Z" fill="url(#gb5)"/>
<path d="M9 4 L12.3 1.3 C13.7 0.5 15.3 0.5 16.7 1.3 L26.6 7 C27.6 7.6 28.2 8.6 28.2 9.8 L28.2 19.8 L20 14.5 C17.5 12.2 14 10.8 9 12.5 Z" fill="url(#ga5)"/>
<path d="M28.2 19.8 L28.2 21.2 C28.2 22.4 27.6 23.4 26.6 24 L16.7 29.7 C15.3 30.5 13.7 30.5 12.3 29.7 L5 25.5 C8.5 26.5 11.5 24.5 14 22 L19 17.5 C21.5 15.5 25 17.5 28.2 19.8 Z" fill="url(#gc5)"/>
<circle cx="14.5" cy="15.9" r="5.6" fill="#fbfbfc"/>
</svg>
<div style="position:absolute;left:976px;top:623px;width:51px;height:24px;background:#effcf3;border-radius:6px"></div>
<div class="t" style="left:986.30px;top:628px;font-size:14px;line-height:14px;letter-spacing:-1.100px;color:#16a34a;font-weight:bold;">LOW</div>
<div style="position:absolute;left:1092px;top:634px;width:7px;height:1.3px;background:#333"></div>
<div style="position:absolute;left:114px;top:741px;width:1248px;height:1px;background:#e3e8f1"></div>
<div style="position:absolute;left:134px;top:691px;width:30px;height:30px;border-radius:50%;background:#e2e7ef"></div>
<svg style="position:absolute;left:140px;top:697px" width="19" height="18" viewBox="0 0 19 18" fill="none" stroke-width="1.45">
<rect x="1.5" y="1.5" width="6" height="6" rx="1.8" stroke="#0b2470"/><rect x="11" y="1.5" width="6" height="6" rx="1.8" stroke="#2d7cf7"/>
<rect x="1.5" y="10.5" width="6" height="6" rx="1.8" stroke="#2d7cf7"/><rect x="11" y="10.5" width="6" height="6" rx="1.8" stroke="#0b2470"/></svg>
<div class="t" style="left:182.60px;top:698px;font-size:16.8px;line-height:16.8px;letter-spacing:1.364px;color:#333;-webkit-text-stroke:0.15px #333;">corcystems-odfb</div>
<div class="t" style="left:547.50px;top:698px;font-size:16.8px;line-height:16.8px;letter-spacing:0.331px;color:#333;-webkit-text-stroke:0.15px #333;">CloudFuze, Inc</div>
<svg style="position:absolute;left:881px;top:690.5px" width="29" height="31" viewBox="0 0 29 31">
<defs>
<linearGradient id="ga6" x1="0.1" y1="0.1" x2="0.9" y2="0.8"><stop offset="0" stop-color="#3347b8"/><stop offset=".45" stop-color="#4a8ad8"/><stop offset="1" stop-color="#52dcf8"/></linearGradient>
<linearGradient id="gb6" x1="0" y1="0" x2="0.3" y2="1"><stop offset="0" stop-color="#b67ee8"/><stop offset=".5" stop-color="#6d7de0"/><stop offset="1" stop-color="#1a66d0"/></linearGradient>
<linearGradient id="gc6" x1="0" y1="0.6" x2="1" y2="0.2"><stop offset="0" stop-color="#d690f3"/><stop offset=".55" stop-color="#8f63c8"/><stop offset="1" stop-color="#4f3690"/></linearGradient>
</defs>
<path d="M12.3 1.3 C13.7 0.5 15.3 0.5 16.7 1.3 L26.6 7 C27.6 7.6 28.2 8.6 28.2 9.8 L28.2 21.2 C28.2 22.4 27.6 23.4 26.6 24 L16.7 29.7 C15.3 30.5 13.7 30.5 12.3 29.7 L2.4 24 C1.4 23.4 0.8 22.4 0.8 21.2 L0.8 9.8 C0.8 8.6 1.4 7.6 2.4 7 Z" fill="url(#gb6)"/>
<path d="M9 4 L12.3 1.3 C13.7 0.5 15.3 0.5 16.7 1.3 L26.6 7 C27.6 7.6 28.2 8.6 28.2 9.8 L28.2 19.8 L20 14.5 C17.5 12.2 14 10.8 9 12.5 Z" fill="url(#ga6)"/>
<path d="M28.2 19.8 L28.2 21.2 C28.2 22.4 27.6 23.4 26.6 24 L16.7 29.7 C15.3 30.5 13.7 30.5 12.3 29.7 L5 25.5 C8.5 26.5 11.5 24.5 14 22 L19 17.5 C21.5 15.5 25 17.5 28.2 19.8 Z" fill="url(#gc6)"/>
<circle cx="14.5" cy="15.9" r="5.6" fill="#fbfbfc"/>
</svg>
<div style="position:absolute;left:976px;top:694px;width:51px;height:24px;background:#effcf3;border-radius:6px"></div>
<div class="t" style="left:986.30px;top:699px;font-size:14px;line-height:14px;letter-spacing:-1.100px;color:#16a34a;font-weight:bold;">LOW</div>
<div style="position:absolute;left:1092px;top:705px;width:7px;height:1.3px;background:#333"></div>
<div style="position:absolute;left:114px;top:812px;width:1248px;height:1px;background:#e3e8f1"></div>
<div style="position:absolute;left:134px;top:762px;width:30px;height:30px;border-radius:50%;background:#e2e7ef"></div>
<svg style="position:absolute;left:140px;top:768px" width="19" height="18" viewBox="0 0 19 18" fill="none" stroke-width="1.45">
<rect x="1.5" y="1.5" width="6" height="6" rx="1.8" stroke="#0b2470"/><rect x="11" y="1.5" width="6" height="6" rx="1.8" stroke="#2d7cf7"/>
<rect x="1.5" y="10.5" width="6" height="6" rx="1.8" stroke="#2d7cf7"/><rect x="11" y="10.5" width="6" height="6" rx="1.8" stroke="#0b2470"/></svg>
<div class="t" style="left:182.60px;top:769px;font-size:16.8px;line-height:16.8px;letter-spacing:0.517px;color:#333;-webkit-text-stroke:0.15px #333;">ceribell-ODFB</div>
<div class="t" style="left:547.50px;top:769px;font-size:16.8px;line-height:16.8px;letter-spacing:0.331px;color:#333;-webkit-text-stroke:0.15px #333;">CloudFuze, Inc</div>
<svg style="position:absolute;left:881px;top:761.5px" width="29" height="31" viewBox="0 0 29 31">
<defs>
<linearGradient id="ga7" x1="0.1" y1="0.1" x2="0.9" y2="0.8"><stop offset="0" stop-color="#3347b8"/><stop offset=".45" stop-color="#4a8ad8"/><stop offset="1" stop-color="#52dcf8"/></linearGradient>
<linearGradient id="gb7" x1="0" y1="0" x2="0.3" y2="1"><stop offset="0" stop-color="#b67ee8"/><stop offset=".5" stop-color="#6d7de0"/><stop offset="1" stop-color="#1a66d0"/></linearGradient>
<linearGradient id="gc7" x1="0" y1="0.6" x2="1" y2="0.2"><stop offset="0" stop-color="#d690f3"/><stop offset=".55" stop-color="#8f63c8"/><stop offset="1" stop-color="#4f3690"/></linearGradient>
</defs>
<path d="M12.3 1.3 C13.7 0.5 15.3 0.5 16.7 1.3 L26.6 7 C27.6 7.6 28.2 8.6 28.2 9.8 L28.2 21.2 C28.2 22.4 27.6 23.4 26.6 24 L16.7 29.7 C15.3 30.5 13.7 30.5 12.3 29.7 L2.4 24 C1.4 23.4 0.8 22.4 0.8 21.2 L0.8 9.8 C0.8 8.6 1.4 7.6 2.4 7 Z" fill="url(#gb7)"/>
<path d="M9 4 L12.3 1.3 C13.7 0.5 15.3 0.5 16.7 1.3 L26.6 7 C27.6 7.6 28.2 8.6 28.2 9.8 L28.2 19.8 L20 14.5 C17.5 12.2 14 10.8 9 12.5 Z" fill="url(#ga7)"/>
<path d="M28.2 19.8 L28.2 21.2 C28.2 22.4 27.6 23.4 26.6 24 L16.7 29.7 C15.3 30.5 13.7 30.5 12.3 29.7 L5 25.5 C8.5 26.5 11.5 24.5 14 22 L19 17.5 C21.5 15.5 25 17.5 28.2 19.8 Z" fill="url(#gc7)"/>
<circle cx="14.5" cy="15.9" r="5.6" fill="#fbfbfc"/>
</svg>
<div style="position:absolute;left:976px;top:765px;width:51px;height:24px;background:#effcf3;border-radius:6px"></div>
<div class="t" style="left:986.30px;top:770px;font-size:14px;line-height:14px;letter-spacing:-1.100px;color:#16a34a;font-weight:bold;">LOW</div>
<div style="position:absolute;left:1092px;top:776px;width:7px;height:1.3px;background:#333"></div>
<div style="position:absolute;left:1092px;top:266px;width:143px;height:27px;background:#f0f0f1;border-radius:14px"></div>
<div style="position:absolute;left:1241px;top:266px;width:121px;height:27px;background:#f0f0f1;border-radius:14px 0 0 14px"></div>
<div class="t" style="left:1105.00px;top:272px;font-size:15.5px;line-height:15.5px;letter-spacing:0.300px;color:#111;-webkit-text-stroke:0.25px #111;">AccessReview...</div>
<div class="t" style="left:1253.90px;top:272px;font-size:15.5px;line-height:15.5px;letter-spacing:0.636px;color:#111;-webkit-text-stroke:0.25px #111;">Administrati...</div>
<div style="position:absolute;left:1092px;top:337px;width:126px;height:27px;background:#f2f2f3;border-radius:14px"></div>
<div style="position:absolute;left:1224px;top:337px;width:133px;height:27px;background:#f2f2f3;border-radius:14px"></div>
<div class="t" style="left:1105.00px;top:343px;font-size:15.5px;line-height:15.5px;letter-spacing:0.407px;color:#111;-webkit-text-stroke:0.25px #111;">userinfo.pro...</div>
<div class="t" style="left:1237.20px;top:343px;font-size:15.5px;line-height:15.5px;letter-spacing:0.777px;color:#111;-webkit-text-stroke:0.25px #111;">userinfo.email</div>
<div style="position:absolute;left:1362px;top:620px;width:6px;height:59px;background:#bdbdbd;border-radius:3px"></div>
<div style="position:absolute;left:114px;top:820px;width:1254px;height:6px;background:#fff"></div>
<div style="position:absolute;left:114px;top:820px;width:1157px;height:6px;background:#bdbdbd;border-radius:3px"></div>
<div style="position:absolute;left:114px;top:826px;width:1254px;height:1px;background:#e3e8f1"></div>
<div style="position:absolute;left:114px;top:827px;width:1254px;height:60px;background:#fbfbfc"></div>
<div class="t" style="left:127.00px;top:850px;font-size:15.5px;line-height:15.5px;letter-spacing:0.456px;color:#222;-webkit-text-stroke:0.25px #222;">Total: 392</div>
<div class="t" style="left:897.00px;top:850px;font-size:15.5px;line-height:15.5px;letter-spacing:0.261px;color:#8c8c8c;-webkit-text-stroke:0.2px #8c8c8c;">Showing 1 of 4 Page</div>
<div class="t" style="left:1070.30px;top:850px;font-size:15.5px;line-height:15.5px;letter-spacing:0.450px;color:#222;-webkit-text-stroke:0.25px #222;">Showing :</div>
<div style="position:absolute;left:1146px;top:839px;width:53px;height:35px;border:1px solid #d4d4d4;border-radius:5px;background:#fff"></div>
<div class="t" style="left:1152.40px;top:850px;font-size:15px;line-height:15px;letter-spacing:-1.400px;color:#555;">100</div>
<svg style="position:absolute;left:1185px;top:853px" width="12" height="10" viewBox="0 0 12 10" fill="none" stroke="#333" stroke-width="1.7" stroke-linecap="round" stroke-linejoin="round"><path d="M1.1 2.3 L5.85 7.4 L10.6 2.3"/></svg>
<div class="t" style="left:1206.60px;top:850px;font-size:15.5px;line-height:15.5px;letter-spacing:-0.133px;color:#222;-webkit-text-stroke:0.25px #222;">Rows</div>
<div class="t" style="left:1271.00px;top:850px;font-size:15.5px;line-height:15.5px;letter-spacing:0.160px;color:#222;-webkit-text-stroke:0.25px #222;">Go to:</div>
<div style="position:absolute;left:1319px;top:839px;width:35px;height:35px;border:1px solid #d4d4d4;border-radius:5px;background:#fff"></div>
<div class="t" style="left:1325.00px;top:850px;font-size:15px;line-height:15px;letter-spacing:0.000px;color:#555;">1</div>
<svg style="position:absolute;left:1339px;top:853px" width="12" height="10" viewBox="0 0 12 10" fill="none" stroke="#333" stroke-width="1.7" stroke-linecap="round" stroke-linejoin="round"><path d="M1.3 2.3 L5.95 7.4 L10.6 2.3"/></svg>
<div style="position:absolute;left:1382px;top:171px;width:1px;height:718px;background:#e3e8f1"></div>
<div style="position:absolute;left:1907px;top:171px;width:1px;height:718px;background:#e3e8f1"></div>
<div style="position:absolute;left:1382px;top:171px;width:526px;height:1px;background:#e3e8f1"></div>
<div style="position:absolute;left:1382px;top:888px;width:526px;height:1px;background:#e3e8f1"></div>
<div style="position:absolute;left:1383px;top:172px;width:524px;height:59px;background:#fff"></div>
<div style="position:absolute;left:1383px;top:231px;width:524px;height:2px;background:#e3e8f1"></div>
<div style="position:absolute;left:1383px;top:233px;width:524px;height:655px;background:#fbfbfc"></div>
<div class="t" style="left:1401.70px;top:193px;font-size:17.4px;line-height:17.4px;letter-spacing:0.670px;color:#3a3a3a;-webkit-text-stroke:0.3px #3a3a3a;">Scopes List</div>
<svg style="position:absolute;left:1871px;top:195px" width="14" height="14" viewBox="0 0 14 14" fill="none" stroke="#333" stroke-width="1.5" stroke-linecap="round"><path d="M2 2 L12.5 12.5 M12.5 2 L2 12.5"/></svg>
<div style="position:absolute;left:1403px;top:253px;width:196px;height:27px;background:#e4e7ef;border-radius:14px"></div>
<div class="t" style="left:1415.70px;top:259px;font-size:15.5px;line-height:15.5px;letter-spacing:0.380px;color:#111;-webkit-text-stroke:0.3px #111;">AccessReview.Read.All</div>
<div class="t" style="left:1409.50px;top:296px;font-size:15.5px;line-height:15.5px;letter-spacing:0.593px;color:#111;-webkit-text-stroke:0.15px #111;">Allows the app to read all access reviews in the organiza...</div>
<div style="position:absolute;left:1383px;top:337px;width:524px;height:1px;background:#e3e8f1"></div>
<div style="position:absolute;left:1403px;top:358px;width:230px;height:27px;background:#e4e7ef;border-radius:14px"></div>
<div class="t" style="left:1415.70px;top:364px;font-size:15.5px;line-height:15.5px;letter-spacing:0.635px;color:#111;-webkit-text-stroke:0.3px #111;">AdministrativeUnit.Read.All</div>
<div class="t" style="left:1409.50px;top:401px;font-size:15.5px;line-height:15.5px;letter-spacing:0.710px;color:#111;-webkit-text-stroke:0.15px #111;">Allows the app to read administrative units and their pro...</div>
<div style="position:absolute;left:1383px;top:442px;width:524px;height:1px;background:#e3e8f1"></div>
<div style="position:absolute;left:1403px;top:463px;width:155px;height:27px;background:#e4e7ef;border-radius:14px"></div>
<div class="t" style="left:1415.70px;top:469px;font-size:15.5px;line-height:15.5px;letter-spacing:0.387px;color:#111;-webkit-text-stroke:0.3px #111;">AuditLog.Read.All</div>
<div class="t" style="left:1409.50px;top:506px;font-size:15.5px;line-height:15.5px;letter-spacing:0.693px;color:#111;-webkit-text-stroke:0.15px #111;">Allows the app to read audit log data in the organization...</div>
<div style="position:absolute;left:1383px;top:547px;width:524px;height:1px;background:#e3e8f1"></div>
<div style="position:absolute;left:1403px;top:568px;width:196px;height:27px;background:#e4e7ef;border-radius:14px"></div>
<div class="t" style="left:1415.70px;top:574px;font-size:15.5px;line-height:15.5px;letter-spacing:0.550px;color:#111;-webkit-text-stroke:0.3px #111;">Directory.ReadWrite.All</div>
<div class="t" style="left:1409.50px;top:611px;font-size:15.5px;line-height:15.5px;letter-spacing:0.683px;color:#111;-webkit-text-stroke:0.15px #111;">Allows the app to read and write directory data in the or...</div>
<div style="position:absolute;left:1383px;top:652px;width:524px;height:1px;background:#e3e8f1"></div>
<div style="position:absolute;left:1403px;top:673px;width:187px;height:27px;background:#e4e7ef;border-radius:14px"></div>
<div class="t" style="left:1415.70px;top:679px;font-size:15.5px;line-height:15.5px;letter-spacing:0.584px;color:#111;-webkit-text-stroke:0.3px #111;">Domain.ReadWrite.All</div>
<div class="t" style="left:1409.50px;top:716px;font-size:15.5px;line-height:15.5px;letter-spacing:0.693px;color:#111;-webkit-text-stroke:0.15px #111;">Allows the app to read and write domain properties in the...</div>
</body></html>
